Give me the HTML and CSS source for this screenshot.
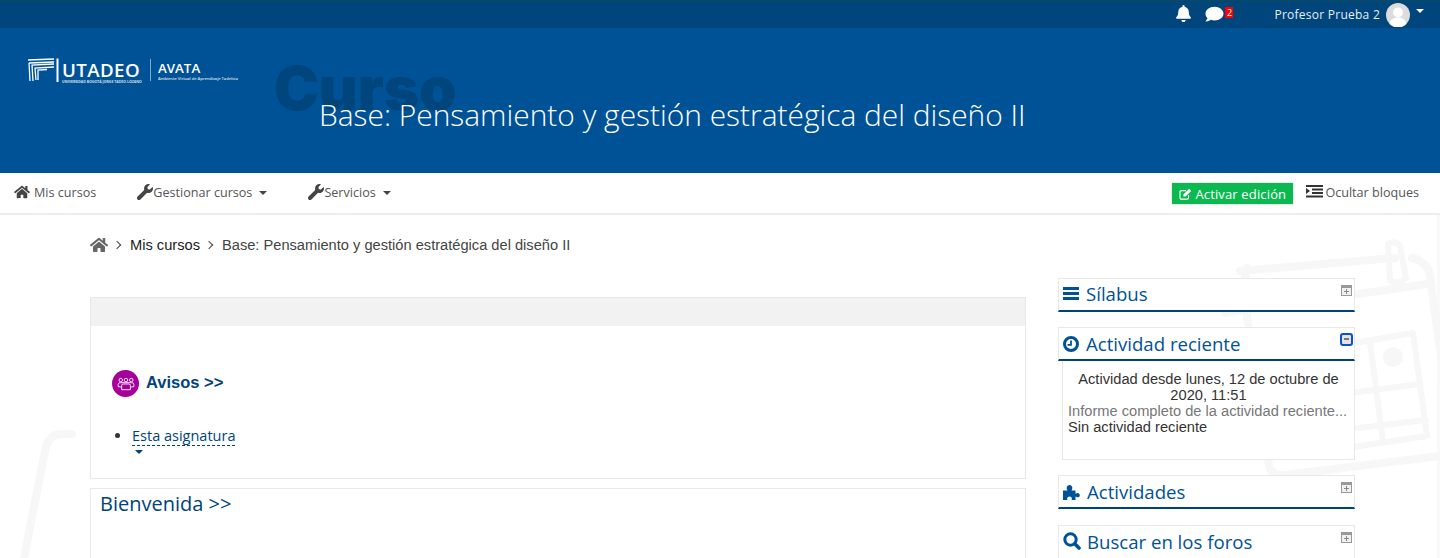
FILE: index.html
```html
<!DOCTYPE html>
<html lang="es">
<head>
<meta charset="utf-8">
<title>Base: Pensamiento y gestión estratégica del diseño II</title>
<link rel="stylesheet" href="styles.css">
</head>
<body>
<svg class="watermark" width="1440" height="558" viewBox="0 0 1440 558" fill="none" stroke="#f7f7f7" stroke-linecap="round" stroke-linejoin="round">
  <rect x="1437" y="173" width="3" height="385" fill="#f9f9f9" stroke="none"/>
  <path d="M72 434 H62 Q48 434 45 451 L24 558" stroke-width="8"/>
  <path d="M1247 268 Q1242 290 1246 310 L1269 466 Q1272 476 1285 475 L1440 456" stroke-width="8"/>
  <path d="M1240 271 L1395 258 M1412 258 Q1428 262 1430 276 L1452 440" stroke-width="8"/>
  <path d="M1225 313 L1428 284" stroke-width="8"/>
  <path d="M1388 244 Q1396 240 1400 246 L1406 278 Q1398 286 1390 280 Z" stroke-width="6"/>
  <path d="M1343 345 L1413 333 L1427 436 L1300 455 M1370 342 L1383 442 M1335 395 L1420 384 M1342 430 L1426 420" stroke-width="6"/>
  <circle cx="1393" cy="357" r="10" fill="#f7f7f7" stroke="none"/>
</svg>
<header class="topbar">
  <div class="usernav">
    <svg class="ico bell" viewBox="0 0 448 512"><path fill="#fff" d="M224 512c35 0 64-29 64-64H160c0 35 29 64 64 64zm215-150c-19-21-55-52-55-154 0-78-54-140-127-155V32a32 32 0 0 0-64 0v21C120 68 66 130 66 208c0 102-36 133-55 154-6 6-9 14-9 22 0 17 13 32 32 32h380c19 0 32-15 32-32 0-8-3-16-9-22z"/></svg>
    <span class="msg">
      <svg class="ico bubble" viewBox="0 0 512 512"><path fill="#fff" d="M256 48C115 48 0 136 0 246c0 47 21 90 56 124-12 46-48 86-49 87-2 2-3 6-2 9 2 3 5 4 8 4 66 0 116-30 141-49 32 11 66 17 102 17 141 0 256-88 256-192S397 48 256 48z"/></svg>
      <span class="badge">2</span>
    </span>
    <span class="username">Profesor Prueba 2</span>
    <span class="avatar"><svg viewBox="0 0 24 24" width="24" height="24"><circle cx="12" cy="12" r="12" fill="#dcdcdc"/><circle cx="12" cy="9.500" r="5" fill="#fff"/><path d="M3.500 21c1-5 5-6.500 8.500-6.500s7.500 1.500 8.500 6.500a12 12 0 0 1-17 0z" fill="#fff"/></svg></span>
    <span class="caret caret-white"></span>
  </div>
</header>

<section class="banner">
  <div class="logo">
    <svg class="logo-mark" viewBox="0 0 32 24" fill="none" stroke="#fff" stroke-width="1.300">
      <path d="M1 2 L27 1 M2 5 L27 4 M3 23 L2 5 M6 23 L5 7 L27 6 M9 22 L8 10 L27 9 M11 22 L11 12 L20 11.500"/>
      <path d="M30.500 0.500 V24" stroke-width="2"/>
    </svg>
    <div class="logo-main">
      <span class="logo-name">UTADEO</span>
      <span class="logo-tag">UNIVERSIDAD BOGOTÁ JORGE TADEO LOZANO</span>
    </div>
    <div class="logo-sep"></div>
    <div class="logo-side">
      <span class="logo-avata">AVATA</span>
      <span class="logo-sub">Ambiente Virtual de Aprendizaje Tadeísta</span>
    </div>
  </div>
  <div class="course-title">
    <span class="ghost">Curso</span>
    <h1>Base: Pensamiento y gestión estratégica del diseño II</h1>
  </div>
</section>

<nav class="mainnav">
  <div class="nav-left">
    <a class="nav-item nav-home"><svg class="ico home" viewBox="0 0 576 512"><path fill="#444" d="M280 148 96 300v164c0 9 7 16 16 16l112-.3c9 0 16-7 16-16V368c0-9 7-16 16-16h64c9 0 16 7 16 16v96c0 9 7 16 16 16l112 .3c9 0 16-7 16-16V300L296 148c-5-4-11-4-16 0zm292 103-84-69V44c0-7-5-12-12-12h-56c-7 0-12 5-12 12v72l-90-74c-18-15-43-15-61 0L4 251c-5 4-6 12-2 17l26 31c4 5 12 6 17 2L280 107c5-4 11-4 16 0l235 194c5 4 13 3 17-2l26-31c4-5 3-13-2-17z"/></svg>Mis cursos</a>
    <a class="nav-item nav-manage"><svg class="ico wrench" viewBox="0 0 512 512"><path fill="#444" d="M507 109c-2-9-13-12-20-5l-74 74-68-11-11-68 74-74c7-7 4-18-6-20-47-12-99 1-136 38-39 39-50 96-34 145L18 402c-25 25-25 66 0 91s66 25 91 0l213-213c49 16 106 5 146-34 37-37 50-90 39-137z"/></svg>Gestionar cursos<span class="caret"></span></a>
    <a class="nav-item"><svg class="ico wrench" viewBox="0 0 512 512"><path fill="#444" d="M507 109c-2-9-13-12-20-5l-74 74-68-11-11-68 74-74c7-7 4-18-6-20-47-12-99 1-136 38-39 39-50 96-34 145L18 402c-25 25-25 66 0 91s66 25 91 0l213-213c49 16 106 5 146-34 37-37 50-90 39-137z"/></svg>Servicios<span class="caret"></span></a>
  </div>
  <div class="nav-right">
    <a class="edit-btn"><svg class="ico edit" viewBox="0 0 16 14" fill="none" stroke="#fff" stroke-width="1.300"><path d="M11 8.500V11.500A1.500 1.500 0 0 1 9.500 13H2.500A1.500 1.500 0 0 1 1 11.500V4.500A1.500 1.500 0 0 1 2.500 3H8"/><path fill="#fff" stroke="none" d="M5 7.500 11.500 1 14 3.500 7.500 10H5z"/></svg>Activar edición</a>
    <a class="hide-blocks"><svg class="ico blocks" viewBox="0 0 17 13"><path fill="#333" d="M0 0h17v2H0zM6 3.500h11v2H6zM6 7h11v2H6zM0 10.500h17v2H0zM0 3l4 3-4 3z"/></svg>Ocultar bloques</a>
  </div>
</nav>

<div class="page">
  <div class="breadcrumb">
    <svg class="ico crumb-home" viewBox="0 0 576 512"><path fill="#666" d="M280 148 96 300v164c0 9 7 16 16 16l112-.3c9 0 16-7 16-16V368c0-9 7-16 16-16h64c9 0 16 7 16 16v96c0 9 7 16 16 16l112 .3c9 0 16-7 16-16V300L296 148c-5-4-11-4-16 0zm292 103-84-69V44c0-7-5-12-12-12h-56c-7 0-12 5-12 12v72l-90-74c-18-15-43-15-61 0L4 251c-5 4-6 12-2 17l26 31c4 5 12 6 17 2L280 107c5-4 11-4 16 0l235 194c5 4 13 3 17-2l26-31c4-5 3-13-2-17z"/></svg>
    <span class="sep"></span>
    <a class="crumb-link">Mis cursos</a>
    <span class="sep"></span>
    <span class="crumb-cur">Base: Pensamiento y gestión estratégica del diseño II</span>
  </div>

  <div class="columns">
    <main class="content">
      <section class="card card-avisos">
        <div class="card-head"></div>
        <div class="avisos-row">
          <span class="purple"><svg viewBox="0 0 20 16" width="18" height="14" fill="none" stroke="#fff" stroke-width="1"><circle cx="4" cy="3.500" r="2"/><circle cx="10" cy="3.500" r="2"/><circle cx="16" cy="3.500" r="2"/><path d="M1 11 V8.500 Q1 6.500 3.500 6.500 H16.500 Q19 6.500 19 8.500 V11 L15.500 11.500 M5 14.500 V9.500 Q5 8 7 8 H13 Q15 8 15 9.500 V14.500 Z M4.500 11.500 L1 11"/></svg></span>
          <a class="avisos-title">Avisos &gt;&gt;</a>
        </div>
        <ul class="subject">
          <li><a class="subject-link">Esta asignatura</a><span class="caret caret-blue"></span></li>
        </ul>
      </section>
      <section class="card card-welcome">
        <h2>Bienvenida &gt;&gt;</h2>
      </section>
    </main>

    <aside class="side">
      <section class="block">
        <div class="block-head">
          <svg class="ico bars" viewBox="0 0 16 13"><path fill="#005296" d="M0 0h16v3H0zM0 5h16v3H0zM0 10h16v3H0z"/></svg>
          <span>Sílabus</span>
          <span class="toggle"></span>
        </div>
      </section>
      <section class="block block-recent">
        <div class="block-head">
          <svg class="ico clock" viewBox="0 0 16 16"><circle cx="8" cy="8" r="6.500" fill="none" stroke="#005296" stroke-width="3"/><path d="M8 4.500V8.800H4.500" fill="none" stroke="#005296" stroke-width="1.800"/></svg>
          <span>Actividad reciente</span>
          <span class="toggle toggle-open"></span>
        </div>
        <div class="block-body">
          <div class="since">Actividad desde lunes, 12 de octubre de 2020, 11:51</div>
          <a class="report">Informe completo de la actividad reciente...</a>
          <div class="none">Sin actividad reciente</div>
        </div>
      </section>
      <section class="block block-act">
        <div class="block-head">
          <svg class="ico puzzle" viewBox="0 0 18 16"><path fill="#005296" d="M0 6.500h4.500C3.700 5 3.500 4 3.800 3 4.200 1.700 5.300 1 6.500 1s2.300.7 2.700 2c.3 1 .1 2-.7 3.500h4v3.300c1.500-.8 2.500-1 3.300-.4.800.5 1 1.100 1 1.800s-.2 1.300-1 1.800c-.8.600-1.800.4-3.300-.4V16H8.500c.5-1 .5-1.800 0-2.500-.5-.6-1.200-.9-2-.9s-1.500.3-2 .9c-.5.700-.5 1.500 0 2.500H0z"/></svg>
          <span>Actividades</span>
          <span class="toggle"></span>
        </div>
      </section>
      <section class="block block-search">
        <div class="block-head">
          <svg class="ico search" viewBox="0 0 18 18" fill="none" stroke="#005296"><circle cx="7.500" cy="7.500" r="5.700" stroke-width="3"/><path d="M11.800 11.800 16 16" stroke-width="3.600" stroke-linecap="round"/></svg>
          <span>Buscar en los foros</span>
          <span class="toggle"></span>
        </div>
      </section>
    </aside>
  </div>
</div>
</body>
</html>
```

FILE: styles.css
```css
* { box-sizing: border-box; }
html, body { margin: 0; height: 558px; overflow: hidden; }
body { background: #fff; font-family: "Open Sans", sans-serif; color: #333; position: relative; }
h1, h2, ul { margin: 0; padding: 0; }
.watermark { position: absolute; left: 0; top: 0; z-index: 0; }
.ico { display: block; flex: none; }

.topbar { height: 28px; background: #00457c; border-top: 1px solid #0a4a5a; display: flex; justify-content: flex-end; position: relative; }
.usernav { display: flex; align-items: center; height: 27px; color: #e6eef5; font-size: 12px; padding-right: 16px; }
.bell { width: 17px; height: 17px; margin-top: -2px; }
.msg { display: flex; align-items: flex-start; margin-left: 13px; height: 27px; }
.bubble { width: 19px; height: 18px; margin-top: 4px; }
.badge { background: #f00; color: #fff; font-size: 9px; line-height: 11px; width: 8px; text-align: center; margin-top: 6px; margin-left: 1px; display: block; }
.username { margin-left: 41px; letter-spacing: .25px; }
.avatar { width: 24px; height: 24px; margin-left: 6px; display: block; }
.avatar svg { display: block; }
.caret { display: inline-block; width: 0; height: 0; border: 4.500px solid transparent; border-bottom: 0; border-top-color: #444; margin-left: 7px; vertical-align: 2px; }
.caret-white { border-top-color: #fff; margin-left: 6px; margin-top: -7px; }

.banner { height: 145px; background: #005296; position: relative; }
.logo { position: absolute; left: 27px; top: 30px; display: flex; align-items: flex-start; color: #fff; }
.logo-mark { width: 32px; height: 24px; display: block; }
.logo-main { margin-left: 3px; display: flex; flex-direction: column; width: 81px; }
.logo-name { font: 600 18.700px/20px "Open Sans", sans-serif; letter-spacing: .4px; margin-top: 2px; }
.logo-tag { font-size: 3.500px; line-height: 4px; font-weight: 700; white-space: nowrap; opacity: .8; }
.logo-sep { width: 1px; height: 22px; background: rgba(255,255,255,.5); margin: 1px 7px 0; }
.logo-side { display: flex; flex-direction: column; }
.logo-avata { font: 600 13.300px/16px "Open Sans", sans-serif; margin-top: 2px; }
.logo-sub { font-size: 4px; line-height: 6px; font-weight: 600; white-space: nowrap; opacity: .85; }
.course-title { position: absolute; left: 319px; top: 69px; }
.course-title h1 { font: 300 29.900px/36px "Open Sans", sans-serif; color: #fff; position: relative; white-space: nowrap; }
.ghost { position: absolute; left: -45px; top: -44px; font: 900 60px/70px Inter, sans-serif; color: #00457c; }

.mainnav { height: 42px; background: #fff; border-bottom: 2px solid #eee; display: flex; justify-content: space-between; font-size: 12.600px; color: #555; position: relative; }
.nav-left { display: flex; align-items: center; padding-left: 14px; height: 38px; }
.nav-item { display: flex; align-items: center; margin-right: 40px; }
.nav-item .caret { margin-left: 7px; margin-top: 1px; }
.nav-home { margin-right: 41px; }
.home { width: 16px; height: 14px; margin-right: 4px; }
.wrench { width: 16px; height: 16px; margin-right: 0; }
.nav-manage { margin-right: 41px; }
.nav-right { display: flex; align-items: center; padding-right: 21px; height: 40px; }
.edit-btn { background: #0cb850; color: #fff; height: 21px; width: 121px; display: flex; align-items: center; padding-left: 7px; margin-top: 1px; margin-right: 13px; font-size: 13px; letter-spacing: .15px; box-shadow: 0 0 2px rgba(0,0,0,.25); }
.edit { width: 14px; height: 12px; margin-right: 2px; }
.hide-blocks { display: flex; align-items: center; margin-top: -2px; }
.blocks { width: 17px; height: 13px; margin-right: 2px; margin-top: -1px; }

.page { padding: 0 85px 0 90px; position: relative; }
.breadcrumb { display: flex; align-items: center; height: 20px; margin-top: 20px; font: 14.650px "Liberation Sans", sans-serif; color: #444; }
.crumb-home { width: 18px; height: 16px; }
.sep { width: 6px; height: 6px; border-top: 1px solid #444; border-right: 1px solid #444; transform: rotate(45deg); margin: 0 10px 0 6px; }
.crumb-link { color: #222; }
.columns { display: grid; grid-template-columns: 936px 297px; column-gap: 32px; margin-top: 23px; }
.content { display: flex; flex-direction: column; gap: 9px; margin-top: 19px; }
.card { border: 1px solid #e8e8e8; background: #fff; }
.card-avisos { height: 182px; }
.card-head { height: 28px; background: #f2f2f2; }
.avisos-row { display: flex; align-items: center; padding: 44px 0 0 21px; }
.purple { width: 27px; height: 27px; border-radius: 50%; background: #a5009a; display: flex; align-items: center; justify-content: center; }
.avisos-title { font: 700 16.500px/20px "Liberation Sans", sans-serif; color: #00437a; margin-left: 7px; margin-top: -3px; }
.subject { padding: 29px 0 0 41px; font-size: 14.500px; color: #00437a; }
.subject li { line-height: 19px; }
.subject li::marker { color: #333; }
.subject-link { border-bottom: 1px dashed #00437a; display: inline-block; line-height: 19px; }
.caret-blue { display: block; border-top-color: #00437a; margin: 4px 0 0 3px; }
.card-welcome { height: 120px; }
.card-welcome h2 { font: 400 20px/26px "Open Sans", sans-serif; color: #00437a; padding: 2px 0 0 9px; }

.side { display: flex; flex-direction: column; position: relative; }
.block { background: #fff; margin-bottom: 15px; }
.block-act { margin-bottom: 16px; }
.block-head { height: 34px; border: 1px solid #e8e8e8; border-bottom: 2px solid #00437a; display: flex; align-items: center; padding-left: 4px; padding-bottom: 2px; font-size: 18.600px; color: #005296; position: relative; }
.block-recent .block-head, .block-act .block-head { padding-bottom: 0; }
.block-head > span:first-of-type { margin-left: 7px; }
.bars { width: 16px; height: 13px; }
.clock { width: 16px; height: 16px; }
.puzzle { width: 18px; height: 16px; }
.search { width: 18px; height: 18px; }
.block-act .block-head > span:first-of-type, .block-search .block-head > span:first-of-type { margin-left: 6px; }
.block-search .block-head { border-bottom: 0; padding-bottom: 3px; }
.toggle { position: absolute; right: 2px; top: 6px; width: 11px; height: 11px; border: 1px solid #999; border-top-width: 3px; background: #f0f0f0; }
.toggle::before { content: ""; position: absolute; left: 4px; top: 1px; width: 1px; height: 5px; background: #888; }
.toggle::after { content: ""; position: absolute; left: 2px; top: 3px; width: 5px; height: 1px; background: #888; }
.toggle-open { right: 1px; top: 5px; width: 13px; height: 13px; border: 2px solid #0f50c8; border-radius: 3px; background: #e4e4e4; }
.toggle-open::before { display: none; }
.toggle-open::after { left: 2px; top: 3px; width: 5px; height: 2px; background: #777; }
.block-body { margin-left: 4px; height: 99px; border: 1px solid #e8e8e8; border-top: 0; padding: 10px 5px 0; font: 14.650px/16px "Liberation Sans", sans-serif; color: #333; }
.since { text-align: center; }
.report { color: #777; display: block; white-space: nowrap; }
```
